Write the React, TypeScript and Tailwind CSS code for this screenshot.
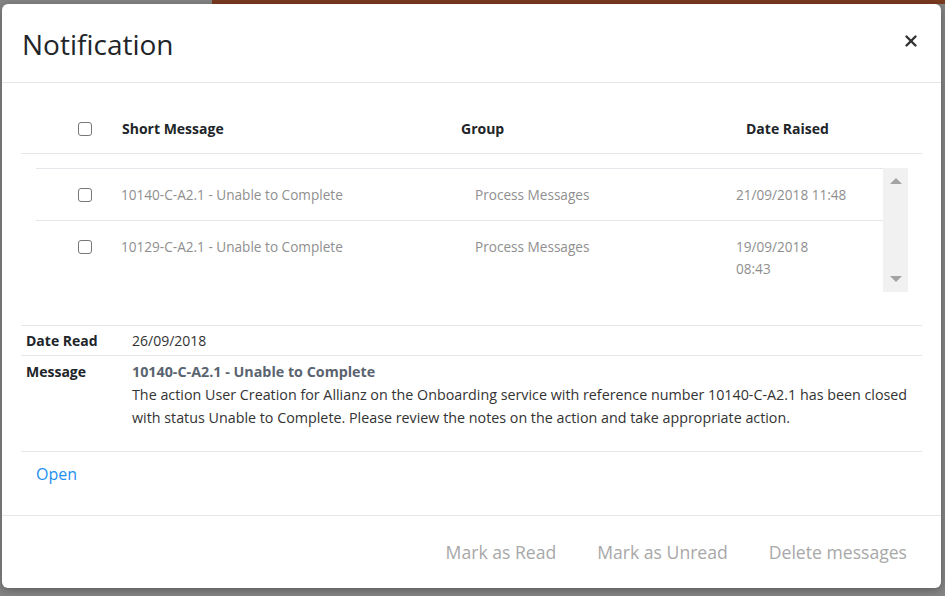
import { X } from "lucide-react";

const rows = [
  { id: "10140", msg: "10140-C-A2.1 - Unable to Complete", group: "Process Messages", date: ["21/09/2018 11:48"] },
  { id: "10129", msg: "10129-C-A2.1 - Unable to Complete", group: "Process Messages", date: ["19/09/2018", "08:43"] },
];

function Box() {
  return <span className="block h-[14px] w-[14px] rounded-[3px] border border-[#767676] bg-white" />;
}

export default function App() {
  return (
    <div
      className="relative h-[596px] w-[945px] overflow-hidden bg-[#848484] text-[#212529]"
      style={{ fontFamily: '"Open Sans", "Noto Sans", sans-serif' }}
    >
      <div className="ml-[212px] h-[4px] bg-[#7a3a1f]" />
      <div className="ml-[2px] flex h-[584px] w-[939px] flex-col rounded-md bg-white shadow-[0_2px_8px_rgba(0,0,0,0.3)]">
        {/* header */}
        <div className="flex h-[79px] shrink-0 items-center justify-between border-b border-[#e6e6e6] pl-[20px] pr-[20px]">
          <h1 className="pt-[1px] text-[28px] font-normal text-[#212529]">Notification</h1>
          <X size={18} strokeWidth={3.2} className="mb-[5px] mr-[1px] text-[#333]" />
        </div>

        {/* body */}
        <div className="flex flex-col px-[19px]">
          <div className="flex h-[71px] items-end border-b border-[#e3e6ea] pb-[14px] text-[14px] font-bold">
            <div className="w-[101px] pl-[57px] pb-[3px]">
              <Box />
            </div>
            <div className="w-[339px]">Short Message</div>
            <div className="w-[285px]">Group</div>
            <div>Date Raised</div>
          </div>

          <div className="ml-[15px] mr-[14px] mt-[14px] flex h-[124px] overflow-hidden">
            <div className="flex-1 border-t border-[#e3e6ea] text-[13.6px] text-[#8f8f8f]">
              {rows.map((r, i) => (
                <div
                  key={r.id}
                  className={`flex leading-[22px] ${i === 0 ? "border-b border-[#e3e6ea] pb-[14px] pt-[15px]" : "pb-[14px] pt-[15px]"}`}
                >
                  <div className="w-[85px] pl-[42px] pt-[4px]">
                    <Box />
                  </div>
                  <div className="w-[354px]">{r.msg}</div>
                  <div className="w-[261px]">{r.group}</div>
                  <div className="whitespace-nowrap">
                    {r.date.map((d) => (
                      <div key={d}>{d}</div>
                    ))}
                  </div>
                </div>
              ))}
            </div>
            <div className="flex w-[25px] flex-col items-center justify-between bg-[#f1f1f1] pb-[10px] pt-[10px]">
              <span className="h-0 w-0 border-x-[6px] border-b-[6px] border-x-transparent border-b-[#a3a3a3]" />
              <span className="h-0 w-0 border-x-[6px] border-t-[6px] border-x-transparent border-t-[#a3a3a3]" />
            </div>
          </div>

          <div className="mt-[33px] border-t border-[#e3e6ea] text-[14px]">
            <div className="flex h-[30px] items-center border-b border-[#e3e6ea]">
              <div className="w-[111px] pl-[5px] font-bold">Date Read</div>
              <div className="text-[#333]">26/09/2018</div>
            </div>
            <div className="flex border-b border-[#e3e6ea] pb-[22px] pt-[4px] leading-[23px]">
              <div className="w-[111px] pl-[5px] font-bold">Message</div>
              <div className="flex-1 text-[14.3px] text-[#333]">
                <div className="font-bold text-[#5a6470]">10140-C-A2.1 - Unable to Complete</div>
                <div>
                  The action User Creation for Allianz on the Onboarding service with reference number 10140-C-A2.1 has been closed
                  <br />
                  with status Unable to Complete. Please review the notes on the action and take appropriate action.
                </div>
              </div>
            </div>
          </div>

          <div className="h-[63px] pl-[15px] pt-[10px]">
            <a className="text-[16px] text-[#1e8ff0]">Open</a>
          </div>
        </div>

        {/* footer */}
        <div className="flex flex-1 items-center justify-end gap-[41px] border-t border-[#e6e6e6] pr-[34px] text-[17.6px] text-[#a8a8a8]">
          <span>Mark as Read</span>
          <span>Mark as Unread</span>
          <span>Delete messages</span>
        </div>
      </div>
    </div>
  );
}
